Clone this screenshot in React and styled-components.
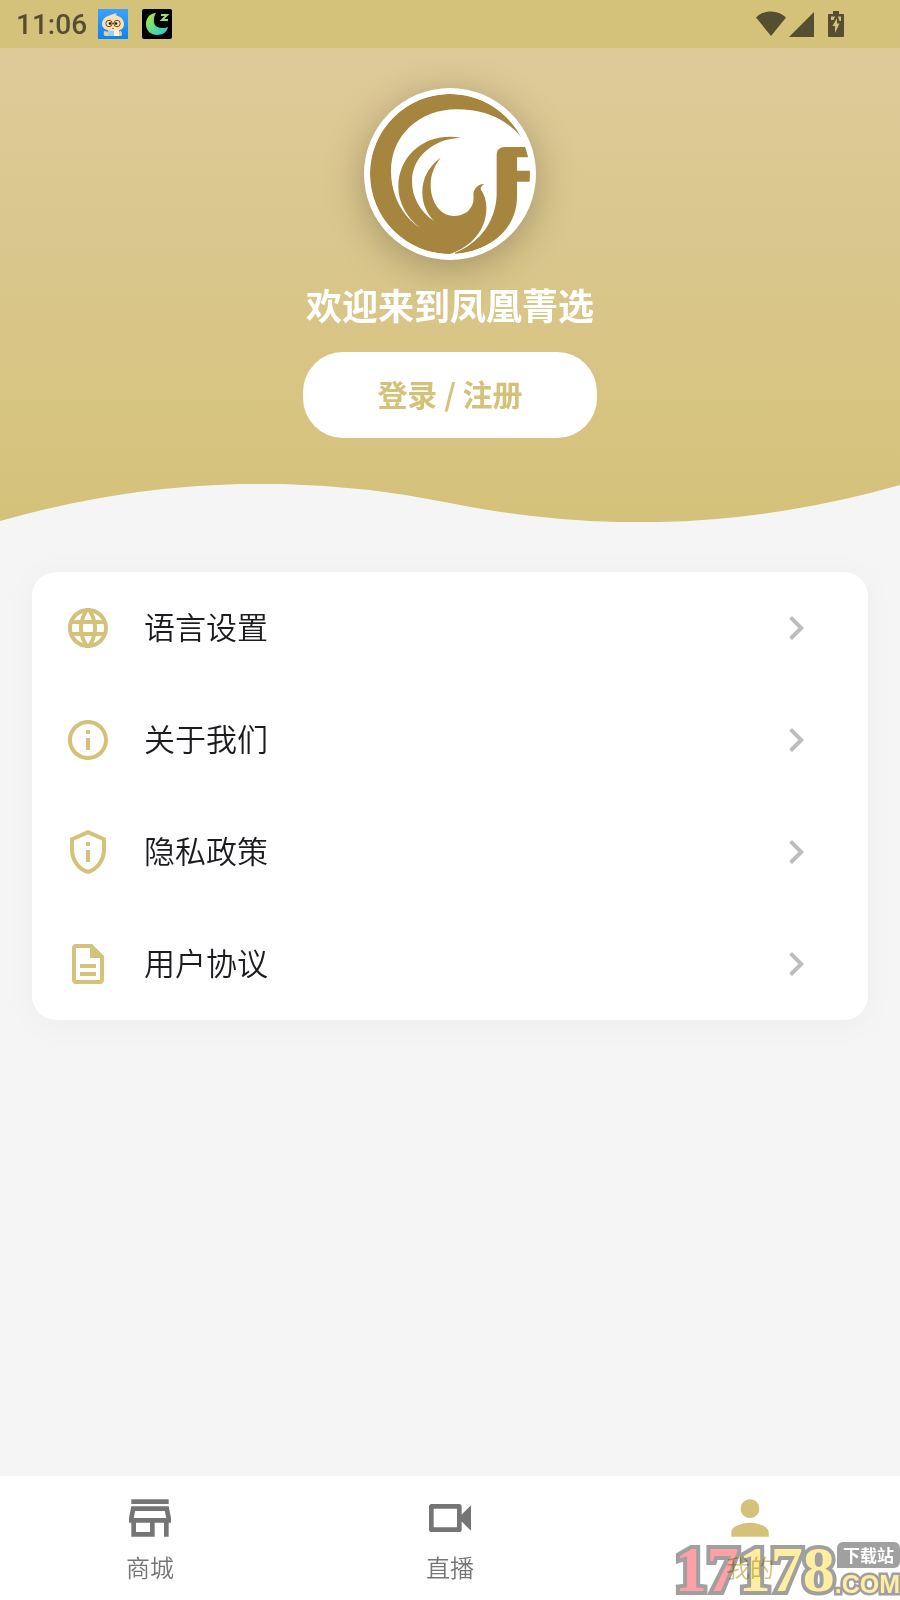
import React from 'react';
import styled, { createGlobalStyle } from 'styled-components';
import {
  MdChevronRight,
  MdLanguage,
  MdInfoOutline,
  MdOutlinePrivacyTip,
  MdOutlineDescription,
  MdOutlineStore,
  MdOutlineVideocam,
  MdPerson,
} from 'react-icons/md';

const gold = '#d4c27a';
const page = '#f5f5f5';
const statusInk = '#564e30';

const GlobalStyle = createGlobalStyle`
  * {
    box-sizing: border-box;
  }

  body {
    margin: 0;
    background: ${page};
    font-family: 'Noto Sans CJK SC', sans-serif;
  }

  svg {
    display: block;
    flex-shrink: 0;
  }
`;

const Screen = styled.div`
  position: relative;
  display: flex;
  flex-direction: column;
  min-height: 100vh;
`;

const StatusBar = styled.div`
  display: flex;
  align-items: center;
  justify-content: space-between;
  height: 48px;
  padding: 0 56px 0 16px;
  background: ${gold};
  color: ${statusInk};
`;

const StatusGroup = styled.div`
  display: flex;
  align-items: center;
  gap: ${({ $gap }) => $gap};
`;

const Time = styled.span`
  padding-top: 2px;
  font-family: Roboto, sans-serif;
  font-size: 28px;
  font-weight: 500;
  line-height: 46px;
`;

const Header = styled.header`
  display: flex;
  flex-direction: column;
  align-items: center;
  padding-top: 40px;
  background: linear-gradient(#deca99, ${gold});
`;

const Avatar = styled.div`
  width: 172px;
  padding: 6px;
  border-radius: 50%;
  background: white;
  box-shadow: 0 8px 40px rgba(0, 0, 0, 0.26);
`;

const Welcome = styled.h1`
  margin: 22px 0 26px;
  color: white;
  font-size: 36px;
  font-weight: 700;
  line-height: 44px;
`;

const LoginButton = styled.button`
  padding: 26px 74px 30px;
  border: 0;
  border-radius: 40px;
  background: white;
  color: ${gold};
  font-family: inherit;
  font-size: 30px;
  font-weight: 700;
  line-height: 30px;
`;

const Wave = styled.svg`
  width: 100%;
  height: 38px;
  margin-top: 46px;
  fill: ${page};
`;

const Main = styled.main`
  flex: 1;
  padding: 50px 32px;
`;

const Menu = styled.nav`
  border-radius: 24px;
  background: white;
  box-shadow: 0 4px 32px rgba(0, 0, 0, 0.04);
`;

const MenuItem = styled.a`
  display: flex;
  align-items: center;
  gap: 32px;
  height: 112px;
  padding: 0 48px 0 32px;
  color: ${gold};
  text-decoration: none;
`;

const MenuLabel = styled.span`
  flex: 1;
  padding-bottom: 4px;
  color: #1c1b1f;
  font-size: 31px;
  font-weight: 350;
  line-height: 48px;
`;

const TabBar = styled.nav`
  display: flex;
  height: 124px;
  background: white;
`;

const Tab = styled.a`
  display: flex;
  flex: 1;
  flex-direction: column;
  align-items: center;
  padding-top: 14px;
  color: ${({ $active }) => ($active ? gold : '#757575')};
  font-size: 24px;
  font-weight: 350;
  line-height: 42px;
  text-decoration: none;
`;

const Watermark = styled.div`
  position: absolute;
  right: 0;
  bottom: 0;
  display: flex;
  align-items: flex-end;
  font-weight: 700;
  mix-blend-mode: multiply;
  pointer-events: none;
`;

const Digits = styled.span`
  color: ${({ $tone }) => $tone};
  font-family: 'Liberation Serif', serif;
  font-size: 64px;
  line-height: 60px;
  paint-order: stroke fill;
  -webkit-text-stroke: 8px #a0a0a0;
`;

const SiteTag = styled.div`
  display: flex;
  flex-direction: column;
  align-items: flex-end;
`;

const SiteLabel = styled.span`
  padding: 0 6px;
  border-radius: 6px 6px 6px 0;
  background: #a0a0a0;
  color: white;
  font-size: 17px;
  line-height: 26px;
`;

const Domain = styled.span`
  color: #ffeda0;
  font-family: 'Liberation Sans', sans-serif;
  font-size: 25px;
  line-height: 32px;
  paint-order: stroke fill;
  -webkit-text-stroke: 5px #a0a0a0;
`;

const BabyIcon = () => (
  <svg width="30" height="30" viewBox="0 0 30 30" aria-hidden="true">
    <defs>
      <linearGradient id="sky" x2="0" y2="1">
        <stop stopColor="#3fa0fb" />
        <stop offset="1" stopColor="#0a84f5" />
      </linearGradient>
    </defs>
    <path fill="url(#sky)" d="M0 0h30v30H0z" />
    <path fill="#f6c98c" d="M6 22l5 1v4H7c-2-1-1-3-1-5zm17 0l-5 1v4h5c2-1 1-3 0-5z" />
    <path fill="#8ed4f5" d="M10 21h11v6H10z" />
    <path
      fill="#fde0ae"
      d="M16 5c1-1 2-1 3 0l-2 1c5 1 9 4 9 9 0 5-4 7-10 7S4 20 4 15c0-5 4-8 9-9 1-1 2-1 3-1z"
    />
    <path fill="#fff3dc" d="M16 21h5v6h-5z" />
    <g fill="none" stroke="#6b4a32">
      <circle cx="11" cy="14.500" r="3.200" />
      <circle cx="19" cy="14.500" r="3.200" />
      <path d="M14 14.500h2" />
    </g>
    <circle cx="12" cy="14.500" r="1.300" fill="#21150e" />
    <circle cx="18" cy="14.500" r="1.300" fill="#21150e" />
    <path stroke="#d9694f" d="M14 19.500h2" />
  </svg>
);

const MoonIcon = () => (
  <svg width="30" height="30" viewBox="0 0 30 30" aria-hidden="true">
    <defs>
      <linearGradient id="moon" x2="1" y2="1">
        <stop stopColor="#c5e83c" />
        <stop offset="0.500" stopColor="#5fdc8c" />
        <stop offset="1" stopColor="#2cc0e8" />
      </linearGradient>
    </defs>
    <rect width="30" height="30" rx="2" fill="#000" />
    <path
      fill="url(#moon)"
      d="M14 4C8 4 4 9 4 15c0 7 5 11 11 11 6 0 10-3 11-8-2 1-4 1-6 1-6 0-9-4-8-9 0-3 1-4 2-6z"
    />
    <path fill="none" stroke="#9be06a" strokeWidth="2" d="M19 6h6l-5 5h6" />
  </svg>
);

const WifiIcon = () => (
  <svg width="30" height="26" viewBox="0 0 30 26" fill={statusInk} aria-hidden="true">
    <path d="M15 25L0 6.500C8-1.500 22-1.500 30 6.500z" />
  </svg>
);

const SignalIcon = () => (
  <svg width="25" height="25" viewBox="0 0 25 25" fill={statusInk} aria-hidden="true">
    <path d="M25 0v25H0z" />
  </svg>
);

const BatteryIcon = () => (
  <svg width="16" height="26" viewBox="0 0 16 26" aria-hidden="true">
    <path
      fill={statusInk}
      d="M5 0h6v3h4c.6 0 1 .4 1 1v21c0 .6-.4 1-1 1H1c-.6 0-1-.4-1-1V4c0-.6.4-1 1-1h4z"
    />
    <path fill={gold} d="M3 5.500h4L5.500 9H3zm7 0h3V10h-1.500zM9 7v5.500h2.500L7 22v-7H4.500z" />
  </svg>
);

const PhoenixLogo = () => (
  <svg viewBox="90 72 480 480" role="img" aria-label="凤凰菁选">
    <defs>
      <clipPath id="disc">
        <circle cx="330" cy="312" r="240" />
      </clipPath>
    </defs>
    <g fill="#a6853f" clipPath="url(#disc)">
      <path
        d="M545 203C500 120 420 72 330 72C198 72 90 180 90 312S198 552 330 552
          C395 530 437 480 439 420C440 395 434 375 422 358C422 350 426 346 433 342
          C417 340 402 354 400 372C402 388 400 400 393 412C383 430 362 438 342 438
          C300 438 272 395 272 345C272 312 284 286 302 263C264 290 247 328 247 366
          C247 402 260 430 282 453C240 425 216 382 216 334C216 262 278 206 363 203
          C258 184 175 255 175 350C175 398 200 443 240 473C188 440 153 375 153 303
          C153 195 240 118 350 118C430 118 498 145 545 203z"
      />
      <path
        d="M345 548C420 520 470 450 470 370V254C470 240 480 231 494 231H556L566 262H531V302H570
          V335H531V380C531 470 460 542 345 552z"
      />
    </g>
  </svg>
);

const menu = [
  { label: '语言设置', Icon: MdLanguage },
  { label: '关于我们', Icon: MdInfoOutline },
  { label: '隐私政策', Icon: MdOutlinePrivacyTip },
  { label: '用户协议', Icon: MdOutlineDescription },
];

const tabs = [
  { label: '商城', Icon: MdOutlineStore },
  { label: '直播', Icon: MdOutlineVideocam },
  { label: '我的', Icon: MdPerson, active: true },
];

const App = () => (
  <Screen>
    <GlobalStyle />
    <StatusBar>
      <StatusGroup $gap="11px">
        <Time>11:06</Time>
        <StatusGroup $gap="14px">
          <BabyIcon />
          <MoonIcon />
        </StatusGroup>
      </StatusGroup>
      <StatusGroup $gap="14px">
        <StatusGroup $gap="3px">
          <WifiIcon />
          <SignalIcon />
        </StatusGroup>
        <BatteryIcon />
      </StatusGroup>
    </StatusBar>
    <Header>
      <Avatar>
        <PhoenixLogo />
      </Avatar>
      <Welcome>欢迎来到凤凰菁选</Welcome>
      <LoginButton type="button">登录 / 注册</LoginButton>
      <Wave viewBox="0 484 900 38" preserveAspectRatio="none" aria-hidden="true">
        <path d="M0 521Q225 457 450 503T900 485V522H0z" />
      </Wave>
    </Header>
    <Main>
      <Menu>
        {menu.map(({ label, Icon }) => (
          <MenuItem href="#" key={label}>
            <Icon size={48} />
            <MenuLabel>{label}</MenuLabel>
            <MdChevronRight size={48} color="#bdbdbd" />
          </MenuItem>
        ))}
      </Menu>
    </Main>
    <TabBar>
      {tabs.map(({ label, Icon, active }) => (
        <Tab href="#" key={label} $active={active}>
          <Icon size={56} />
          {label}
        </Tab>
      ))}
    </TabBar>
    <Watermark>
      <Digits $tone="#ffa0a8">17</Digits>
      <Digits $tone="#ffeda0">178</Digits>
      <SiteTag>
        <SiteLabel>下载站</SiteLabel>
        <Domain>.COM</Domain>
      </SiteTag>
    </Watermark>
  </Screen>
);

export default App;
